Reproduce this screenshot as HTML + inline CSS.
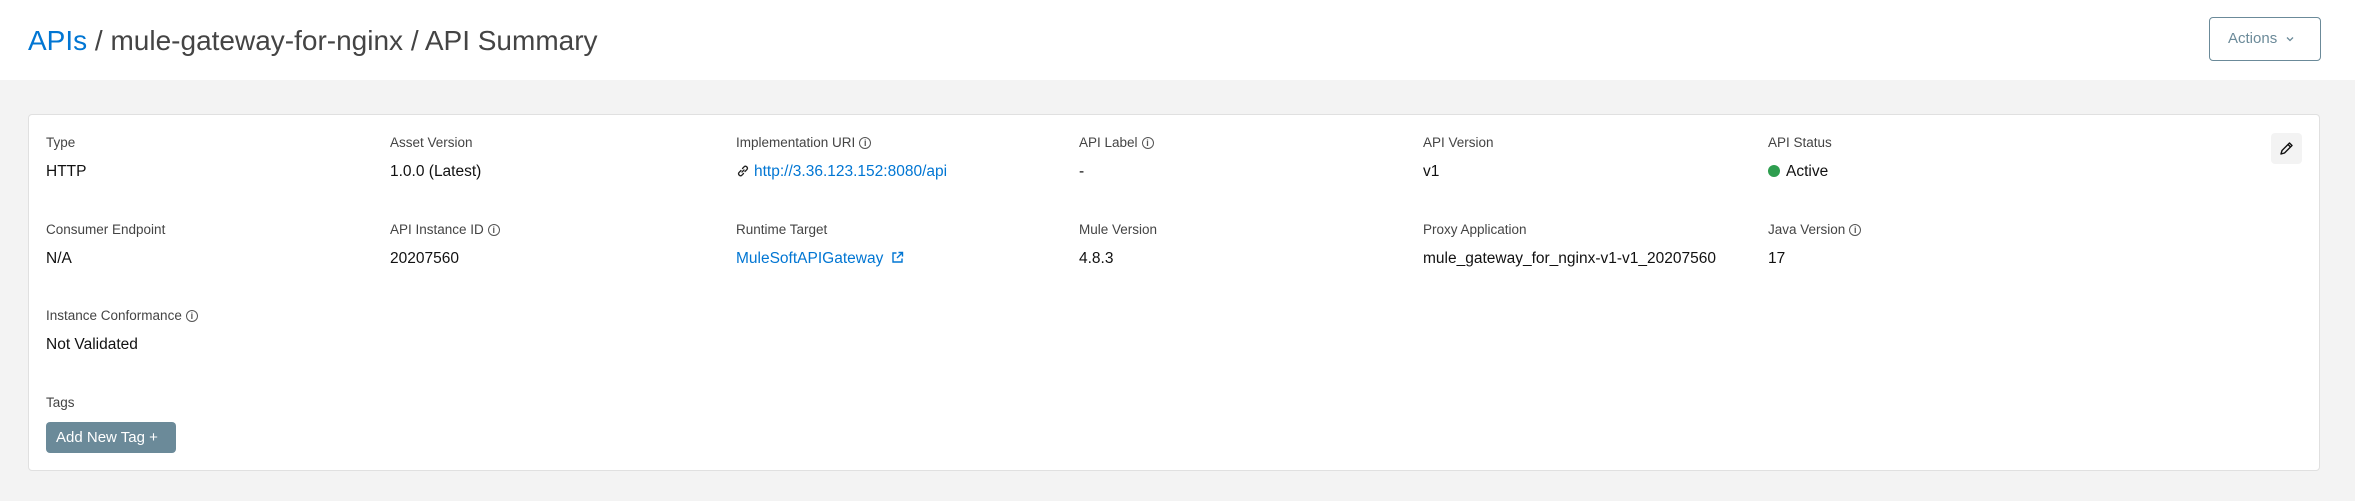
<!DOCTYPE html>
<html><head><meta charset="utf-8"><style>
*{margin:0;padding:0;box-sizing:border-box}
body{width:2355px;height:501px;background:#f3f3f3;font-family:"Liberation Sans",sans-serif;position:relative;overflow:hidden}
.hdr{position:absolute;left:0;top:0;width:2355px;height:80px;background:#fff}
.bc{position:absolute;left:28px;top:25px;font-size:28px;color:#444;white-space:nowrap}
.bc a{color:#0176d3;text-decoration:none}
.act{position:absolute;left:2209px;top:17px;width:112px;height:44px;border:1px solid #6b8a99;border-radius:4px;color:#6b8a99;font-size:15px;line-height:42px;padding-left:18px}
.card{position:absolute;left:28px;top:114px;width:2292px;height:357px;background:#fff;border:1px solid #e0e0e0;border-radius:4px}
.f{position:absolute;white-space:nowrap}
.l{font-size:13.5px;color:#444}
.v{font-size:15.5px;color:#111}
.lnk{color:#0176d3}
.i{display:inline-block;width:12px;height:12px;border:1.3px solid #555;border-radius:50%;font-size:9px;line-height:10px;text-align:center;vertical-align:1px;margin-left:4px;color:#555;font-weight:bold}
.pen{position:absolute;left:2271px;top:133px;width:31px;height:31px;background:#f3f3f3;border-radius:4px}
.btn{position:absolute;left:46px;top:422px;width:130px;height:31px;background:#6b8a99;border-radius:4px;color:#fff;font-size:15px;line-height:31px;padding-left:10px}
.dot{display:inline-block;width:12px;height:12px;background:#2e9e4f;border-radius:50%;margin-right:6px;vertical-align:-1px}
</style></head><body>
<div class="hdr"><div class="bc"><a>APIs</a> / mule-gateway-for-nginx / API Summary</div>
<div class="act">Actions <svg width="10" height="8" viewBox="0 0 10 8" style="margin-left:4px"><path d="M2 2.5 L5 5.5 L8 2.5" stroke="#6b8a99" stroke-width="1.3" fill="none"/></svg></div></div>
<div class="card"></div>
<div class="pen"><svg width="31" height="31" viewBox="0 0 31 31"><path d="M10 21 L11 17.5 L18.5 10 L21 12.5 L13.5 20 Z M17 11.5 L19.5 14" stroke="#111" stroke-width="1.4" fill="none" stroke-linejoin="round"/></svg></div>

<div class="f l" style="left:46px;top:135px">Type</div>
<div class="f v" style="left:46px;top:163px">HTTP</div>
<div class="f l" style="left:390px;top:135px">Asset Version</div>
<div class="f v" style="left:390px;top:163px">1.0.0 (Latest)</div>
<div class="f l" style="left:736px;top:135px">Implementation URI<span class="i">i</span></div>
<div class="f v" style="left:736px;top:163px"><svg width="14" height="14" viewBox="0 0 14 14" style="vertical-align:-2px;margin-right:4px"><path d="M6 8 L8 6 M5 6.5 L3 8.5 a2 2 0 0 0 2.8 2.8 L7.5 9.5 M9 7.5 L11 5.5 a2 2 0 0 0 -2.8 -2.8 L6.5 4.5" stroke="#222" stroke-width="1.3" fill="none" stroke-linecap="round"/></svg><span class="lnk">http://3.36.123.152:8080/api</span></div>
<div class="f l" style="left:1079px;top:135px">API Label<span class="i">i</span></div>
<div class="f v" style="left:1079px;top:163px">-</div>
<div class="f l" style="left:1423px;top:135px">API Version</div>
<div class="f v" style="left:1423px;top:163px">v1</div>
<div class="f l" style="left:1768px;top:135px">API Status</div>
<div class="f v" style="left:1768px;top:163px"><span class="dot"></span>Active</div>

<div class="f l" style="left:46px;top:222px">Consumer Endpoint</div>
<div class="f v" style="left:46px;top:250px">N/A</div>
<div class="f l" style="left:390px;top:222px">API Instance ID<span class="i">i</span></div>
<div class="f v" style="left:390px;top:250px">20207560</div>
<div class="f l" style="left:736px;top:222px">Runtime Target</div>
<div class="f v lnk" style="left:736px;top:250px">MuleSoftAPIGateway <svg width="13" height="13" viewBox="0 0 13 13" style="vertical-align:-1px;margin-left:3px"><path d="M5.5 2 H2 V11 H11 V7.5 M7.5 1.5 H11.5 V5.5 M11.5 1.5 L6 7" stroke="#0176d3" stroke-width="1.4" fill="none"/></svg></div>
<div class="f l" style="left:1079px;top:222px">Mule Version</div>
<div class="f v" style="left:1079px;top:250px">4.8.3</div>
<div class="f l" style="left:1423px;top:222px">Proxy Application</div>
<div class="f v" style="left:1423px;top:250px">mule_gateway_for_nginx-v1-v1_20207560</div>
<div class="f l" style="left:1768px;top:222px">Java Version<span class="i">i</span></div>
<div class="f v" style="left:1768px;top:250px">17</div>

<div class="f l" style="left:46px;top:308px">Instance Conformance<span class="i">i</span></div>
<div class="f v" style="left:46px;top:336px">Not Validated</div>
<div class="f l" style="left:46px;top:395px">Tags</div>
<div class="btn">Add New Tag +</div>
</body></html>
